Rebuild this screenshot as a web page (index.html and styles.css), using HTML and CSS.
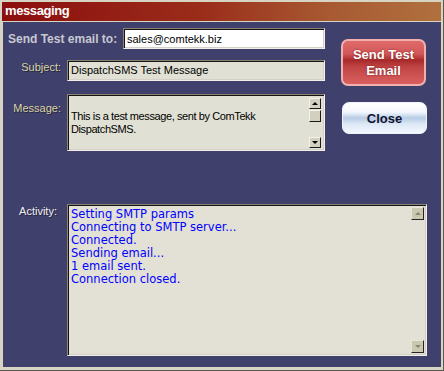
FILE: index.html
```html
<!DOCTYPE html>
<html lang="en">
<head>
  <meta charset="UTF-8">
  <title>messaging</title>
  <link rel="stylesheet" href="styles.css">
</head>
<body>
  <div class="window">
    <div class="titlebar">messaging</div>

    <div class="content">
      <div class="row-email">
        <label class="label-main" for="toAddress">Send Test email to:</label>
        <input type="text" id="toAddress" class="field field-white" value="sales@comtekk.biz">
      </div>

      <div class="label label-subject">Subject:</div>
      <div class="field field-subject">DispatchSMS Test Message</div>

      <div class="label label-message">Message:</div>
      <div class="field field-message">
        <div class="message-text">This is a test message, sent by ComTekk DispatchSMS.</div>
        <div class="scrollbar">
          <div class="scroll-btn"><span class="arrow-up"></span></div>
          <div class="scroll-thumb"></div>
          <div class="scroll-space"></div>
          <div class="scroll-btn"><span class="arrow-down"></span></div>
        </div>
      </div>

      <div class="buttons">
        <button class="btn btn-send">Send Test<br>Email</button>
        <button class="btn btn-close">Close</button>
      </div>

      <div class="label label-activity">Activity:</div>
      <div class="field field-activity">
        <div class="activity-log">
          <div>Setting SMTP params</div>
          <div>Connecting to SMTP server...</div>
          <div>Connected.</div>
          <div>Sending email...</div>
          <div>1 email sent.</div>
          <div>Connection closed.</div>
        </div>
        <div class="scrollbar scrollbar-flat">
          <div class="scroll-btn"><span class="arrow-up"></span></div>
          <div class="scroll-space"></div>
          <div class="scroll-btn"><span class="arrow-down"></span></div>
        </div>
      </div>
    </div>
  </div>
</body>
</html>
```

FILE: styles.css
```css
body {
  margin: 0;
  font-family: "Liberation Sans", Arial, sans-serif;
  background-color: #d4d0c8;
}

.window {
  width: 444px;
  height: 371px;
  box-sizing: border-box;
  padding: 2px 2px 3px 3px;
  background-color: #d8d4c4;
  border-right: 1px solid #5a5850;
  border-bottom: 1px solid #5a5850;
  display: flex;
  flex-direction: column;
}

.titlebar {
  height: 19px;
  margin-left: -1px;
  margin-bottom: 1px;
  padding-left: 3px;
  background: linear-gradient(to right, #8c0e0e 0%, #9a2c1a 45%, #a85a32 75%, #b0703e 100%);
  color: #ffffff;
  font-size: 13px;
  font-weight: bold;
  letter-spacing: -0.4px;
  line-height: 18px;
}

.content {
  flex: 1;
  background-color: #40406c;
  display: grid;
  grid-template-columns: 64px 258px 17px 85px;
  grid-template-rows: 32px 34px 110px 1fr;
  align-items: start;
  padding-top: 6px;
  padding-bottom: 11px;
}

/* first row: label + address box */
.row-email {
  grid-column: 1 / 3;
  grid-row: 1;
  display: flex;
  align-items: center;
}

.label-main {
  padding-left: 5px;
  color: #c8c8d2;
  font-size: 12px;
  font-weight: bold;
}

.label {
  grid-column: 1;
  text-align: right;
  font-size: 11px;
  color: #d8d4a6;
  text-shadow: 1px 1px 0 #262640;
}

.label-subject {
  grid-row: 2;
  padding: 1px 6px 0 0;
}

.label-message {
  grid-row: 3;
  padding: 8px 6px 0 0;
}

.label-activity {
  grid-row: 4;
  padding: 1px 10px 0 0;
  color: #f0f0f0;
}

.field {
  box-sizing: border-box;
  border: 1px solid;
  border-color: #8a8470 #f2f0e6 #f2f0e6 #8a8470;
  box-shadow: inset 1px 1px 0 #141414, inset -1px -1px 0 #d4d0c8;
  background-color: #e1e0d4;
  font-size: 11px;
  color: #000000;
}

.field-white {
  width: 202px;
  height: 21px;
  margin-left: auto;
  padding: 0 3px;
  background-color: #ffffff;
  font-family: "Liberation Sans", Arial, sans-serif;
  font-size: 11px;
  outline: none;
}

.field-subject {
  grid-column: 2;
  grid-row: 2;
  height: 21px;
  padding: 3px 3px 0;
}

.field-message {
  grid-column: 2;
  grid-row: 3;
  height: 57px;
  display: flex;
}

.message-text {
  flex: 1;
  padding: 15px 2px 0 3px;
  line-height: 13px;
  letter-spacing: -0.4px;
}

.scrollbar {
  width: 12px;
  padding: 3px 3px 2px 0;
  display: flex;
  flex-direction: column;
}

.scroll-btn,
.scroll-thumb {
  box-sizing: border-box;
  width: 12px;
  height: 11px;
  background-color: #d4d0c0;
  border: 1px solid;
  border-color: #f4f2ea #1a1a1a #1a1a1a #f4f2ea;
  display: flex;
  align-items: center;
  justify-content: center;
}

.scroll-thumb {
  height: 12px;
  margin-top: 1px;
}

.scroll-space {
  flex: 1;
}

.arrow-up,
.arrow-down {
  width: 0;
  height: 0;
  border-left: 3px solid transparent;
  border-right: 3px solid transparent;
}

.arrow-up {
  border-bottom: 3px solid #000000;
}

.arrow-down {
  border-top: 3px solid #000000;
}

.scrollbar-flat {
  width: 13px;
  padding: 2px 2px 2px 0;
}

.scrollbar-flat .scroll-btn {
  width: 13px;
  height: 13px;
  background-color: #cbc8b2;
  border-color: #e8e6da #262626 #262626 #e8e6da;
}

.scrollbar-flat .arrow-up {
  border-bottom-color: #8a8670;
}

.scrollbar-flat .arrow-down {
  border-top-color: #8a8670;
}

.buttons {
  grid-column: 4;
  grid-row: 1 / 4;
  padding-top: 11px;
  display: flex;
  flex-direction: column;
  gap: 16px;
}

.btn {
  box-sizing: border-box;
  width: 85px;
  font-family: "Liberation Sans", Arial, sans-serif;
  font-size: 13px;
  font-weight: bold;
  border-radius: 7px;
  cursor: pointer;
}

.btn-send {
  height: 47px;
  margin-left: -1px;
  line-height: 16px;
  color: #ffffff;
  border: 2px solid #f0b0b0;
  background: linear-gradient(to bottom, #e06a6a 0%, #d25858 30%, #a82a2a 45%, #c04444 60%, #da6060 100%);
  text-shadow: 0 0 2px #7a1a1a;
}

.btn-close {
  height: 32px;
  color: #101030;
  border: 1px solid #f0f4ff;
  background: linear-gradient(to bottom, #ffffff 0%, #f4f8ff 30%, #b8cce4 50%, #dce8f6 70%, #f4f8ff 100%);
}

.field-activity {
  grid-column: 2 / 5;
  grid-row: 4;
  align-self: stretch;
  background-color: #e3e1d5;
  display: flex;
}

.activity-log {
  flex: 1;
  padding: 3px 3px;
  font-family: "DejaVu Sans", Verdana, sans-serif;
  font-size: 11.5px;
  line-height: 13px;
  color: #0000ff;
}
```
